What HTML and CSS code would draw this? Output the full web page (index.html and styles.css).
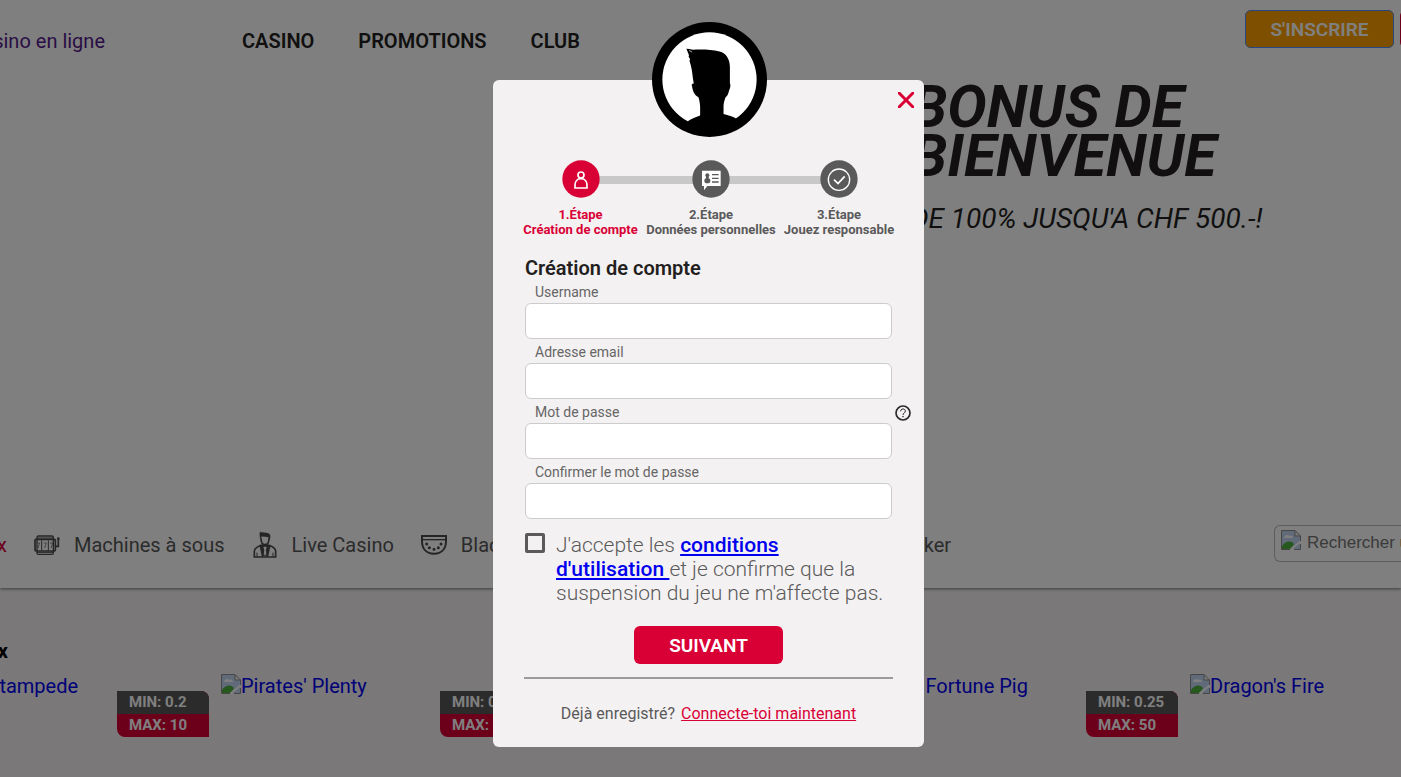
FILE: index.html
```html
<!DOCTYPE html>
<html lang="fr">
<head>
  <meta charset="UTF-8" />
  <meta name="viewport" content="width=device-width, initial-scale=1.0"/>
  <title>Casino en ligne</title>
  <link rel="stylesheet" href="styles.css">
</head>
<body>
  <!-- shared icon for pictures that did not load -->
  <svg class="sprite" aria-hidden="true">
    <symbol id="broken" viewBox="0 0 20 20">
      <path d="M1 1h13l5 5v7l-7 6H1z" fill="#c3d4f2"/>
      <path d="M3 8c0-3 4-4 5-2 2-1 4 0 4 2z" fill="#fff"/>
      <path d="M1 19v-3c3-5 9-6 12-2l-3 5z" fill="#4fb13c"/>
      <path d="M14 1v5h5z" fill="#f4f4f4"/>
      <path d="M19 13v6h-7z" fill="#c3d4f2"/>
      <path d="M9 20l11-9" stroke="#fff" stroke-width="2"/>
      <path d="M.5 19.500V.5H14l5.500 5.500v5M14 .5V6h5.500M19.500 14v5.500H13M.5 19.500H9" fill="none" stroke="#8c8c8c"/>
    </symbol>
  </svg>

  <header class="header">
    <a href="#" class="brand"><span>Casino en ligne</span></a>
    <nav class="main-nav">
      <a href="#">CASINO</a>
      <a href="#">PROMOTIONS</a>
      <a href="#">CLUB</a>
    </nav>
    <div class="actions">
      <button type="button" class="btn btn-signup">S'INSCRIRE</button>
      <button type="button" class="btn">CONNEXION</button>
    </div>
  </header>

  <section class="hero">
    <div class="hero-text">
      <h1>BONUS DE<br>BIENVENUE</h1>
      <p>DE 100% JUSQU'A CHF 500.-!</p>
    </div>
  </section>

  <div class="category-bar">
    <nav class="categories">
      <a href="#" class="active"><span>Jeux</span></a>
      <a href="#">
        <svg viewBox="104 70 78 68" width="26" height="24" fill="none" stroke="#4a4a4a">
          <rect x="113" y="77" width="49" height="55" rx="4" stroke-width="4"/>
          <rect x="107" y="87" width="61" height="35" rx="3" stroke-width="5"/>
          <path d="M113 83h49M113 126h49M127 90v30M147 90v30" stroke-width="3"/>
          <path d="M113 98h8l-5 15M133 98h8l-5 15M152 98h8l-5 15" stroke-width="2"/>
          <path d="M169 108h8V86" stroke-width="5"/>
          <circle cx="177" cy="85" r="2" stroke-width="4"/>
        </svg>
        Machines à sous
      </a>
      <a href="#">
        <svg viewBox="756 66 78 84" width="26" height="28" fill="none" stroke="#4a4a4a" stroke-width="5">
          <path d="M780 69c8 3 20 2 27 5 5 3 4 10 2 18l-4-8-20-2-3 8c-3-7-3-14-2-21z" fill="#4a4a4a" stroke-width="1"/>
          <path d="M783 88c0 14 5 19 12 19s12-5 12-19"/>
          <path d="M763 144v-17c0-11 11-14 20-18h24c9 4 20 7 20 18v17z"/>
          <path d="M779 110l7 33 9-4 9 4 7-33-9-2-7 5-8-5z" fill="#4a4a4a" stroke-width="1"/>
          <path d="M790 114h10l-2 8 1 15h-8l2-15z" fill="#fff" stroke="none"/>
          <path d="M771 131v12M819 131v12" stroke-width="3"/>
        </svg>
        Live Casino
      </a>
      <a href="#">
        <svg viewBox="1263 72 78 66" width="26" height="22" fill="none" stroke="#4a4a4a" stroke-width="6">
          <path d="M1266 78h72v15c0 24-14 38-36 38s-36-14-36-38z"/>
          <path d="M1268 89h68" stroke-width="4"/>
          <path d="M1280 102h.1M1288 113h.1M1302 118h.1M1315 113h.1M1323 102h.1" stroke-width="9" stroke-linecap="round"/>
        </svg>
        Blackjack
      </a>
      <a href="#">
        <svg viewBox="0 0 26 26" width="26" height="26" fill="none" stroke="#4a4a4a" stroke-width="2">
          <circle cx="13" cy="13" r="11"/><circle cx="13" cy="13" r="5"/>
        </svg>
        Roulette
      </a>
      <a href="#">
        <svg viewBox="0 0 26 26" width="26" height="26" fill="none" stroke="#4a4a4a" stroke-width="2">
          <rect x="6" y="2" width="14" height="22" rx="2"/>
        </svg>
        Baccarat
      </a>
      <a href="#">
        <svg viewBox="0 0 26 26" width="26" height="26" fill="none" stroke="#4a4a4a" stroke-width="2">
          <circle cx="13" cy="13" r="11"/>
        </svg>
        Poker
      </a>
    </nav>
    <label class="search">
      <svg width="20" height="20"><use href="#broken"/></svg>
      <input type="text" placeholder="Rechercher un jeu" aria-label="Rechercher un jeu">
    </label>
  </div>

  <section class="shelf">
    <h2><span>Jeux</span></h2>
    <div class="games">
      <article class="game">
        <a href="#"><svg width="20" height="20"><use href="#broken"/></svg>Buffalo Stampede</a>
        <div class="limits"><span>MIN: 0.2</span><span>MAX: 10</span></div>
      </article>
      <article class="game">
        <a href="#"><svg width="20" height="20"><use href="#broken"/></svg>Pirates' Plenty</a>
        <div class="limits"><span>MIN: 0.2</span><span>MAX: 50</span></div>
      </article>
      <article class="game">
        <a href="#"><svg width="20" height="20"><use href="#broken"/></svg>Book of Gold</a>
        <div class="limits"><span>MIN: 0.2</span><span>MAX: 50</span></div>
      </article>
      <article class="game">
        <a href="#"><svg width="20" height="20"><use href="#broken"/></svg>The Fortune Pig</a>
        <div class="limits"><span>MIN: 0.25</span><span>MAX: 50</span></div>
      </article>
      <article class="game">
        <a href="#"><svg width="20" height="20"><use href="#broken"/></svg>Dragon's Fire</a>
        <div class="limits"><span>MIN: 0.2</span><span>MAX: 50</span></div>
      </article>
    </div>
  </section>

  <div class="overlay">
    <div class="modal" role="dialog" aria-labelledby="modalTitle">
      <svg class="avatar" viewBox="486 38 344 344" width="115" height="115">
        <circle cx="658" cy="210" r="172"/>
        <circle cx="658" cy="210" r="141" fill="#fff"/>
        <path d="M589 118l8 1 11 2c25-2 54-1 80 5 20 4 31 24 31 46v49c4 8-1 17-3 24-2 9-5 15-10 18-3 9-6 18-6 27v23c14 4 28 6 40 15l-15 24H604l-11-17c11-7 24-12 37-17v-25c0-11-2-20-5-30-13-7-17-18-19-32-2-5-2-9 5-9-4-19-4-38-9-55l-4-13 2-4-5-10 2-2z"/>
        <path d="M597 123l9 5" stroke="#fff" stroke-width="2"/>
      </svg>
      <button type="button" class="close" aria-label="Fermer">
        <svg viewBox="0 0 16 16" width="16" height="16"><path d="M1 1l14 14M15 1L1 15" stroke="#d90036" stroke-width="3" stroke-linecap="round"/></svg>
      </button>

      <ol class="steps">
        <li class="current">
          <svg viewBox="0 0 114 114" width="38" height="38" fill="none" stroke="#fff" stroke-width="5">
            <circle cx="57" cy="57" r="56" class="dot"/>
            <circle cx="57" cy="45" r="9"/>
            <path d="M39 84V75c0-11 7-19 18-19s18 8 18 19v9z"/>
          </svg>
          <span>1.Étape</span>
          <span>Création de compte</span>
        </li>
        <li>
          <svg viewBox="0 0 114 114" width="38" height="38">
            <circle cx="57" cy="57" r="56" class="dot"/>
            <path d="M30 32h56v46H46L36 91V78h-6z" fill="#fff"/>
            <circle cx="46" cy="46" r="6" class="dot"/>
            <path d="M46 46v14" stroke="#5a5a5a" stroke-width="8"/>
            <ellipse cx="46" cy="62" rx="9" ry="8" class="dot"/>
            <path d="M60 44h20M60 55h20M60 66h20" stroke="#5a5a5a" stroke-width="4"/>
          </svg>
          <span>2.Étape</span>
          <span>Données personnelles</span>
        </li>
        <li>
          <svg viewBox="0 0 114 114" width="38" height="38" fill="none" stroke="#fff" stroke-width="4">
            <circle cx="57" cy="57" r="56" class="dot"/>
            <circle cx="57" cy="59" r="32"/>
            <path d="M42 59l12 12 20-22" stroke-width="5"/>
          </svg>
          <span>3.Étape</span>
          <span>Jouez responsable</span>
        </li>
      </ol>

      <form id="registrationForm">
        <h2 id="modalTitle">Création de compte</h2>

        <div class="form-group">
          <label for="username">Username</label>
          <input type="text" id="username">
        </div>

        <div class="form-group">
          <label for="email">Adresse email</label>
          <input type="email" id="email">
        </div>

        <div class="form-group">
          <label for="password">Mot de passe</label>
          <input type="password" id="password">
          <button type="button" class="help" aria-label="Aide">
            <svg viewBox="0 0 48 48" width="16" height="16" fill="none" stroke="#2b2b2b">
              <circle cx="24" cy="24" r="21" stroke-width="5"/>
              <path d="M17 19c0-10 14-9 14-1 0 6-7 6-7 12" stroke-width="3"/>
              <path d="M24 33v4" stroke-width="4"/>
            </svg>
          </button>
        </div>

        <div class="form-group">
          <label for="confirm">Confirmer le mot de passe</label>
          <input type="password" id="confirm">
        </div>

        <div class="terms">
          <input type="checkbox" id="terms">
          <label for="terms">J'accepte les <a href="#">conditions<br>d'utilisation </a>et je confirme que la<br>suspension du jeu ne m'affecte pas.</label>
        </div>

        <button type="submit" class="btn btn-next">SUIVANT</button>
      </form>

      <p class="login">Déjà enregistré? <a href="#">Connecte-toi maintenant</a></p>
    </div>
  </div>
</body>
</html>
```
FILE: styles.css
```css
* {
  box-sizing: border-box;
}

body {
  display: flex;
  flex-direction: column;
  min-height: 100vh;
  margin: 0;
  overflow: hidden;
  background: #fff;
  color: #231f20;
  font-family: Roboto, sans-serif;
  font-size: 20px;
  line-height: 24px;
}

h1, h2, p, ol {
  margin: 0;
  padding: 0;
}

svg {
  display: block;
  flex: none;
}

.sprite {
  position: absolute;
  width: 0;
  height: 0;
}

.btn {
  flex: none;
  width: 149px;
  height: 38px;
  padding: 0;
  border: none;
  border-radius: 6px;
  background: #d90036;
  color: #fff;
  font-family: inherit;
  font-size: 19px;
  font-weight: 600;
  cursor: pointer;
}

/* Header */
.header {
  display: flex;
  align-items: center;
  height: 82px;
}

.brand {
  display: flex;
  justify-content: flex-end;
  width: 105px;
  overflow: hidden;
  color: #551a8b;
  text-decoration: none;
  white-space: nowrap;
}

.brand span,
.categories .active span,
.shelf h2 span {
  flex: none;
}

.main-nav {
  display: flex;
  gap: 44px;
  margin-left: 137px;
}

.main-nav a {
  color: #231f20;
  font-weight: 600;
  text-decoration: none;
}

.actions {
  display: flex;
  align-self: flex-start;
  gap: 6px;
  width: 156px;
  margin-top: 10px;
  margin-left: auto;
  overflow: hidden;
}

.btn-signup {
  background: #ff9f00;
  outline: 1px solid #4d90fe;
  outline-offset: -1px;
}

/* Hero */
.hero {
  position: relative;
  z-index: 1;
  display: flex;
  height: 420px;
  padding-left: 65%;
  background: #fff;
  font-style: italic;
}

.hero h1 {
  font-size: 59px;
  font-weight: 700;
  line-height: 49px;
}

.hero p {
  margin-top: 23px;
  font-size: 28px;
  line-height: 32px;
}

/* Categories */
.category-bar {
  position: relative;
  display: flex;
  align-items: center;
  justify-content: space-between;
  height: 86px;
  box-shadow: 0 1px 3px rgba(0, 0, 0, 0.5);
}

.categories {
  display: flex;
  gap: 27px;
}

.categories a {
  display: flex;
  align-items: center;
  gap: 14px;
  color: #575757;
  text-decoration: none;
  white-space: nowrap;
}

.categories .active {
  justify-content: flex-end;
  width: 7px;
  overflow: hidden;
  color: #d90036;
}

.search {
  display: flex;
  flex: none;
  width: 127px;
  height: 37px;
  margin-bottom: 4px;
  padding: 4px 0 0 6px;
  overflow: hidden;
  border: 1px solid #bbb;
  border-right: none;
  border-radius: 6px 0 0 6px;
}

.search input {
  flex: none;
  width: 180px;
  height: 26px;
  padding: 0 6px;
  border: none;
  background: none;
  font-family: "Liberation Sans", sans-serif;
  font-size: 17px;
}

.search input::placeholder {
  color: #757575;
}

/* Games */
.shelf {
  flex: 1;
  padding-top: 51px;
  overflow: hidden;
  background: #f4f1f2;
}

.shelf h2 {
  display: flex;
  justify-content: flex-end;
  width: 8px;
  overflow: hidden;
  color: #000;
  font-size: 20px;
}

.games {
  display: flex;
  gap: 12px;
  margin-top: 11px;
  margin-left: -102px;
}

.game {
  position: relative;
  flex: none;
  width: 311px;
  height: 63px;
}

.game a {
  display: flex;
  color: #0000ee;
  text-decoration: none;
}

.limits {
  position: absolute;
  right: 0;
  bottom: 0;
  min-width: 92px;
  overflow: hidden;
  border-radius: 0 8px 0 8px;
  background: #d90036;
  color: #fff;
  font-size: 15px;
  font-weight: 700;
  line-height: 23px;
}

.limits span {
  display: block;
  padding: 0 12px;
}

.limits span:first-child {
  background: #575757;
}

/* Modal */
.overlay {
  position: fixed;
  inset: 0;
  z-index: 2;
  display: flex;
  align-items: flex-start;
  justify-content: center;
  padding: 80px 0 0 16px;
  background: rgba(0, 0, 0, 0.5);
}

.modal {
  position: relative;
  width: 431px;
  padding: 80px 28px 21px;
  border-radius: 6px;
  background: #f4f1f2;
}

.avatar {
  position: absolute;
  top: -58px;
  left: 50%;
  margin-left: -57px;
}

.close,
.help {
  position: absolute;
  padding: 0;
  border: none;
  background: none;
  cursor: pointer;
}

.close {
  top: 12px;
  right: 10px;
}

.steps {
  display: grid;
  grid-template-columns: 119px 134px 114px;
  gap: 4px;
  list-style: none;
  color: #5a5a5a;
  font-size: 13px;
  font-weight: 700;
  line-height: 15px;
}

.steps li {
  position: relative;
  display: flex;
  flex-direction: column;
  align-items: center;
  white-space: nowrap;
}

.steps svg {
  position: relative;
  z-index: 1;
  margin-bottom: 9px;
}

.steps .dot {
  fill: #5a5a5a;
  stroke: none;
}

.steps .current {
  color: #d90036;
}

.steps .current .dot {
  fill: #d90036;
}

/* connecting line, drawn from each dot to the next one */
.steps li:not(:last-child)::after {
  content: "";
  position: absolute;
  top: 16px;
  left: 50%;
  width: 130px;
  height: 8px;
  background: #c8c8c8;
}

form {
  margin-top: 18px;
  padding: 0 4px;
}

form h2 {
  font-size: 20px;
  font-weight: 600;
  line-height: 26px;
}

.form-group {
  position: relative;
  margin-bottom: 2px;
}

.form-group label {
  display: block;
  padding-left: 10px;
  color: #666;
  font-size: 14px;
  line-height: 22px;
}

.form-group input {
  display: block;
  width: 100%;
  height: 36px;
  padding: 0 10px;
  border: 1px solid #ccc;
  border-radius: 6px;
  background: #fff;
  font-family: inherit;
  font-size: 16px;
}

.help {
  top: 4px;
  right: -19px;
}

.terms {
  display: flex;
  gap: 11px;
  margin-top: 14px;
}

.terms input {
  flex: none;
  appearance: none;
  width: 20px;
  height: 20px;
  margin: 0;
  border: 3px solid #5a5a5a;
  border-radius: 2px;
}

.terms label {
  color: #5a5a5a;
  font-size: 21px;
  font-weight: 300;
  white-space: nowrap;
}

.terms a {
  color: #0000ee;
  font-weight: 500;
}

.btn-next {
  display: block;
  margin: 21px auto 0;
}

.login {
  margin: 13px 3px 0;
  padding-top: 23px;
  border-top: 2px solid #9c9a9b;
  color: #5a5a5a;
  font-size: 16px;
  text-align: center;
}

.login a {
  margin-left: 2px;
  color: #d90036;
}
```
